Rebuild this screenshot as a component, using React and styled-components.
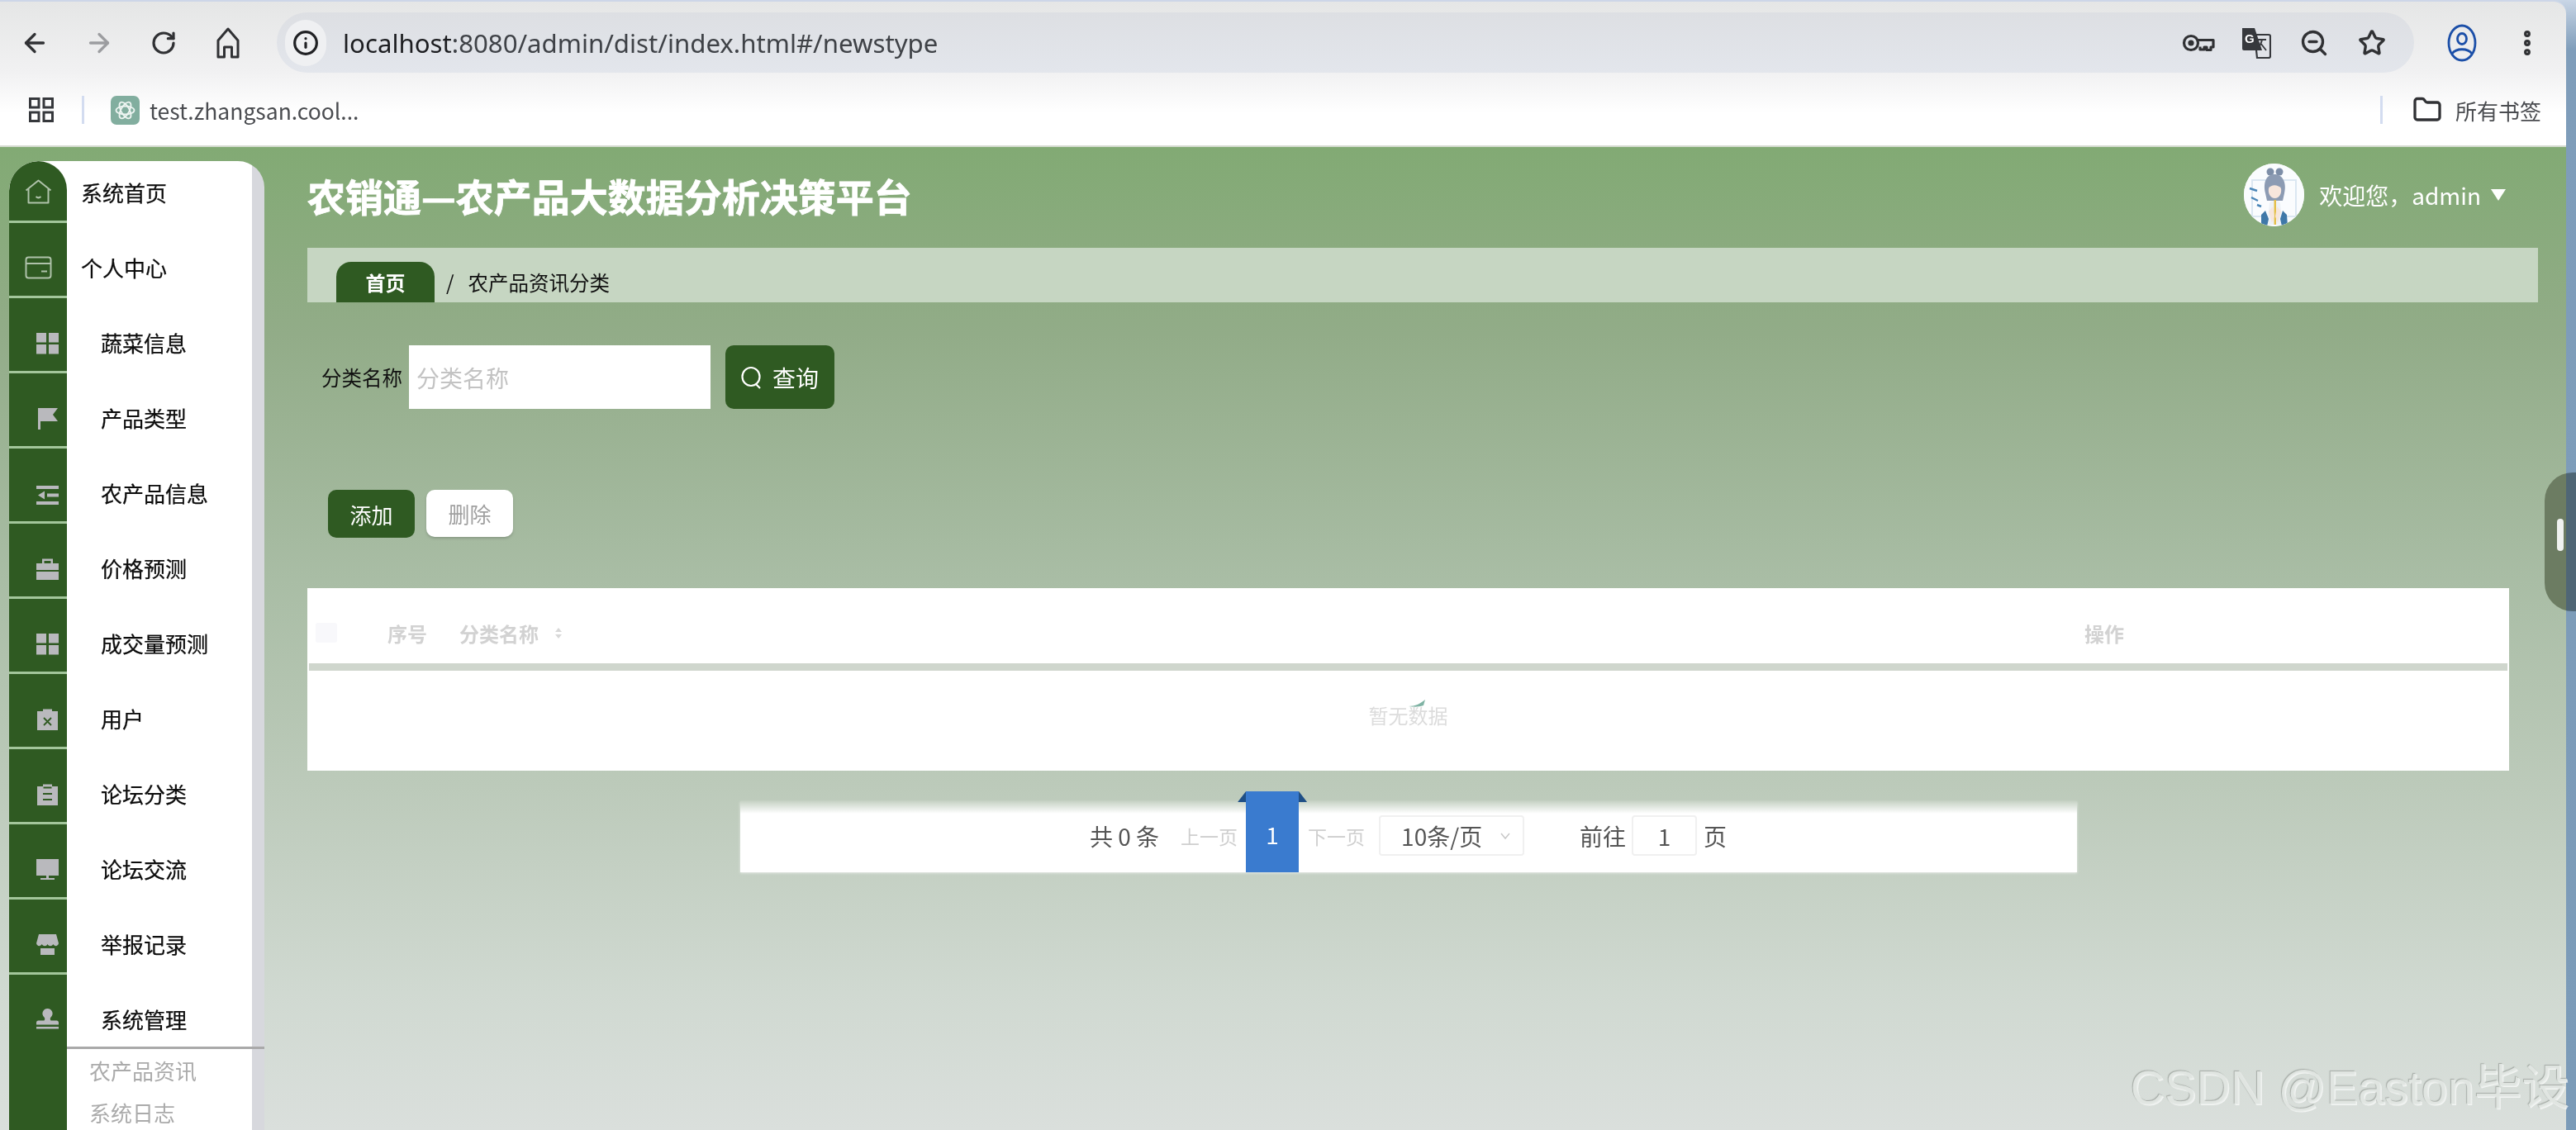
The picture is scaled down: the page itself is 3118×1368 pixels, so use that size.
import React from 'react';
import styled, { createGlobalStyle } from 'styled-components';
import { ArrowLeft, ArrowRight, RotateCw, ZoomOut, Star, EllipsisVertical, Info, Folder } from 'lucide-react';

const CJK = `"Noto Sans CJK SC", "Noto Sans", sans-serif`;
const GREEN = '#2f5a22';

const Global = createGlobalStyle`
  html, body { margin: 0; padding: 0; width: 3118px; height: 1368px; overflow: hidden; background: #7b9bb8; }
  * { box-sizing: border-box; }
  body { font-family: ${CJK}; }
`;

const Root = styled.div`
  position: relative;
  width: 3118px;
  height: 1368px;
  display: flex;
  overflow: hidden;
  background: linear-gradient(to bottom, #c9d6e6 0, #7f9dba 60px, #7b9bb8 100%);
  filter: blur(0.5px);
`;
const Main = styled.div`
  width: 3106px;
  height: 1368px;
  display: flex;
  flex-direction: column;
`;

/* browser chrome */
const Chrome = styled.header`
  height: 178px;
  flex: none;
  border-top: 2px solid #cdd6e8;
  border-top-right-radius: 16px;
  background: linear-gradient(to bottom, #e5e6e6 0, #f1f1f2 85px, #ffffff 135px);
  border-bottom: 2px solid #d5dbd0;
  display: flex;
  flex-direction: column;
`;
const NavBar = styled.div`
  display: flex;
  align-items: center;
  height: 73px;
  margin-top: 13px;
  padding-left: 3px;
`;
const NavCell = styled.div`
  flex: none;
  width: ${p => p.$w || 78}px;
  height: 73px;
  display: flex;
  align-items: center;
  justify-content: center;
  color: ${p => p.$color || '#303134'};
`;
const AddressBar = styled.div`
  flex: none;
  width: 2587px;
  height: 73px;
  margin: 0 18px 0 20px;
  padding: 0 16px 0 10px;
  border-radius: 37px;
  background: linear-gradient(to bottom, #dddfe3, #e3e6ec);
  display: flex;
  align-items: center;
`;
const InfoChip = styled.div`
  flex: none;
  width: 50px;
  height: 56px;
  border-radius: 28px;
  background: #eff0f2;
  display: flex;
  align-items: center;
  justify-content: center;
  color: #202124;
  margin-right: 20px;
`;
const Url = styled.div`
  flex: 1;
  font: 400 31.2px "Noto Sans", sans-serif;
  color: #3f4247;
  white-space: nowrap;
  & b { font-weight: 400; color: #1c1d20; }
`;
const BookmarkBar = styled.div`
  flex: 1;
  display: flex;
  align-items: center;
  padding: 2px 30px 0 35px;
`;
const Sep = styled.div`
  flex: none;
  width: 3px;
  height: 34px;
  background: #d3dcf0;
  margin: ${p => p.$m};
`;
const BookmarkText = styled.span`
  font: 400 ${p => p.$size || 26}px ${CJK};
  color: ${p => p.$color || '#4a4c50'};
  white-space: nowrap;
  margin-left: ${p => p.$ml || 0}px;
`;
const Spacer = styled.div`flex: 1;`;

/* page */
const Page = styled.div`
  flex: 1;
  min-height: 0;
  display: flex;
  padding: 17px 0 0 11px;
  background: linear-gradient(to bottom, #82aa74 0%, #92ac88 19%, #a9bda5 44%, #bccaba 65%, #d0d9d1 86%, #dadfdc 100%);
`;

const Sidebar = styled.nav`
  flex: none;
  width: 309px;
  display: flex;
  flex-direction: column;
  padding-right: 15px;
  overflow: hidden;
  border-radius: 36px 32px 0 0;
  background: linear-gradient(to right, #ffffff calc(100% - 15px), #d7d8dd calc(100% - 15px));
`;
const Row = styled.div`
  flex: none;
  height: ${p => p.$h || 91}px;
  display: flex;
`;
const IconCell = styled.div`
  flex: none;
  width: 70px;
  display: flex;
  align-items: flex-end;
  justify-content: ${p => (p.$sub ? 'flex-start' : 'center')};
  padding: 0 0 20px ${p => (p.$sub ? 33 : 0)}px;
  background: ${GREEN};
  color: ${p => (p.$sub ? '#b9b9bd' : '#afc2aa')};
  border-bottom: ${p => (p.$noLine ? 'none' : '3px solid #a3c69b')};
  border-radius: ${p => (p.$first ? '35px 35px 0 0' : '0')};
`;
const RowLabel = styled.div`
  flex: 1;
  display: flex;
  align-items: flex-end;
  padding: 0 0 ${p => (p.$noLine ? 15 : 19)}px ${p => (p.$sub ? 41 : 17)}px;
  font-size: 26px;
  line-height: 36px;
  color: #0c0c0c;
  -webkit-text-stroke: 0.25px #0c0c0c;
  white-space: nowrap;
`;
const SubRow = styled.div`
  flex: 1;
  display: flex;
`;
const SubIconFill = styled.div`
  flex: none;
  width: 70px;
  background: ${GREEN};
`;
const SubMenu = styled.div`
  flex: 1;
  margin-right: -15px;
  padding: 5px 0 0 27px;
  border-top: 3px solid #a9a9a9;
  display: flex;
  flex-direction: column;
  gap: 9px;
`;
const SubItem = styled.div`
  height: 42px;
  line-height: 42px;
  font-size: 26px;
  color: #ababab;
  white-space: nowrap;
`;

const Content = styled.main`
  flex: none;
  width: 2734px;
  margin-left: 52px;
  display: flex;
  flex-direction: column;
`;
const TopBar = styled.div`
  flex: none;
  height: 105px;
  display: flex;
  align-items: center;
  justify-content: space-between;
  padding: 0 73px 24px 0;
`;
const Title = styled.h1`
  margin: 0;
  font: 700 46px/1 ${CJK};
  -webkit-text-stroke: 0.8px #fff;
  color: #fff;
  white-space: nowrap;
`;
const User = styled.div`
  display: flex;
  align-items: center;
  color: #fff;
  font-size: 28px;
`;
const AvatarWrap = styled.div`
  width: 73px;
  height: 76px;
  border-radius: 50%;
  overflow: hidden;
  margin-right: 18px;
  background: #fff;
`;
const Caret = styled.span`
  width: 0;
  height: 0;
  margin-left: 12px;
  border-left: 9px solid transparent;
  border-right: 9px solid transparent;
  border-top: 14px solid #fff;
`;
const Breadcrumb = styled.div`
  flex: none;
  width: 2700px;
  height: 66px;
  background: #c6d6c2;
  display: flex;
  align-items: flex-end;
  padding-left: 35px;
  font-size: 24.5px;
  color: #111;
`;
const CrumbTab = styled.div`
  width: 119px;
  height: 49px;
  border-radius: 18px 18px 0 0;
  background: ${GREEN};
  color: #fff;
  font-weight: 700;
  font-size: 24px;
  display: flex;
  align-items: center;
  justify-content: center;
`;
const CrumbText = styled.span`
  height: 49px;
  line-height: 50px;
  margin-left: ${p => p.$ml}px;
`;
const SearchRow = styled.div`
  flex: none;
  margin-top: 52px;
  padding-left: 17px;
  display: flex;
  align-items: center;
`;
const SearchLabel = styled.label`
  font-size: 24.5px;
  color: #111;
  margin-right: 8px;
  white-space: nowrap;
`;
const SearchInput = styled.input`
  width: 365px;
  height: 77px;
  border: none;
  outline: none;
  background: #fff;
  padding: 0 9px;
  font: 400 28px ${CJK};
  &::placeholder { color: #c3c3c3; opacity: 1; }
`;
const Btn = styled.button`
  flex: none;
  width: ${p => p.$w}px;
  height: ${p => p.$h}px;
  border: none;
  border-radius: 10px;
  padding: 0;
  background: ${p => (p.$ghost ? '#fff' : GREEN)};
  color: ${p => (p.$ghost ? '#a0a0a0' : '#fff')};
  box-shadow: ${p => (p.$ghost ? '0 2px 3px rgba(90,100,90,.35)' : 'none')};
  font: 400 ${p => p.$fs}px ${CJK};
  display: flex;
  align-items: center;
  justify-content: center;
  gap: 12px;
`;
const SearchBtn = styled(Btn)`margin-left: 18px;`;
const ToolRow = styled.div`
  flex: none;
  margin-top: 98px;
  padding-left: 25px;
  display: flex;
  gap: 14px;
`;

const Table = styled.section`
  flex: none;
  width: 2665px;
  height: 221px;
  margin-top: 61px;
  background: #fff;
  display: flex;
  flex-direction: column;
`;
const HeadRow = styled.div`
  flex: none;
  height: 91px;
  display: grid;
  grid-template-columns: 97px 87px 1967px auto;
  align-items: center;
  padding-top: 17px;
  font-size: 24px;
  font-weight: 700;
  color: #d2d2d2;
`;
const CheckBox = styled.span`
  display: block;
  width: 26px;
  height: 24px;
  margin-left: 10px;
  background: #f8f8fb;
  border-radius: 3px;
`;
const HeadName = styled.span`
  display: flex;
  align-items: center;
  gap: 20px;
`;
const SortMark = styled.span`
  display: flex;
  flex-direction: column;
  gap: 3px;
  &::before, &::after {
    content: '';
    width: 0;
    height: 0;
    border-left: 4px solid transparent;
    border-right: 4px solid transparent;
  }
  &::before { border-bottom: 5px solid #d8d8d8; }
  &::after { border-top: 5px solid #d8d8d8; }
`;
const HeadRule = styled.div`
  flex: none;
  height: 9px;
  margin: 0 2px;
  background: #cfd6cd;
`;
const EmptyBody = styled.div`
  flex: 1;
  display: flex;
  flex-direction: column;
  align-items: center;
  justify-content: center;
  padding-bottom: 19px;
`;
const EmptyText = styled.span`
  font-size: 24px;
  line-height: 30px;
  color: #dcdcdc;
  margin-top: -5px;
`;
const TickWrap = styled.span`
  margin-left: 20px;
`;
const Pager = styled.div`
  flex: none;
  width: 1618px;
  height: 86px;
  margin: 37px 0 0 524px;
  padding-left: 423px;
  display: flex;
  align-items: center;
  background: linear-gradient(to bottom, rgba(255,255,255,.15) 0, #fff 15px);
  box-shadow: 0 1px 3px rgba(255,255,255,.6);
  font-size: 28px;
  color: #555;
  white-space: nowrap;
`;
const PagerMuted = styled.span`
  font-size: 23px;
  color: #cfcfcf;
  margin: ${p => p.$m};
`;
const PageBtn = styled.div`
  position: relative;
  flex: none;
  width: 64px;
  height: 98px;
  align-self: flex-end;
  margin-bottom: -3px;
  background: #3a7bcf;
  color: #fff;
  font-size: 28px;
  display: flex;
  align-items: center;
  justify-content: center;
  padding-top: 6px;
  &::before {
    content: '';
    position: absolute;
    top: 0;
    left: -10px;
    right: -10px;
    height: 13px;
    z-index: -1;
    background: #1f4f86;
    clip-path: polygon(10px 0, calc(100% - 10px) 0, 100% 100%, 0 100%);
  }
`;
const PagerInner = styled.div`
  position: relative;
  z-index: 0;
  display: flex;
  align-items: center;
  height: 100%;
  padding-bottom: 3px;
`;
const SizeSelect = styled.div`
  flex: none;
  width: 176px;
  height: 49px;
  margin-left: 17px;
  padding: 0 14px 0 25px;
  border: 2px solid #f0f0f0;
  border-radius: 4px;
  display: flex;
  align-items: center;
  justify-content: space-between;
`;
const Goto = styled.span`
  margin: ${p => p.$m};
`;
const GotoInput = styled.div`
  flex: none;
  width: 79px;
  height: 49px;
  border: 2px solid #f0f0f0;
  border-radius: 4px;
  display: flex;
  align-items: center;
  justify-content: center;
`;

/* things on top */
const Handle = styled.div`
  position: absolute;
  right: 0;
  top: 572px;
  width: 38px;
  height: 168px;
  border-radius: 34px 0 0 34px;
  background: linear-gradient(to right, #6c7c62 26px, #4f6675 26px);
  display: flex;
  align-items: center;
  justify-content: flex-end;
  padding: 0 15px 18px 0;
  &::after {
    content: '';
    width: 8px;
    height: 39px;
    border-radius: 4px;
    background: #f0f2f0;
  }
`;
const Watermark = styled.div`
  position: absolute;
  right: 8px;
  top: 1277px;
  font: 400 57.5px/80px "Liberation Sans", ${CJK};
  color: rgba(232, 236, 233, .85);
  text-shadow: -1px -1px 1px rgba(120,125,120,.5), 1px 1px 0 rgba(255,255,255,.7);
  white-space: nowrap;
`;

const S = ({ children, vb = '0 0 27 27', size = 27, h }) => (
  <svg width={size} height={h || size} viewBox={vb} fill="currentColor" style={{ display: 'block' }}>{children}</svg>
);

const HomeLine = () => (
  <svg width="33" height="30" viewBox="0 0 33 30" fill="none" stroke="currentColor" strokeWidth="2" style={{ display: 'block' }}>
    <path d="M1.5 13.5 16.5 1.5l15 12M4.5 11.5V28.5h24V11.5" strokeLinejoin="round" />
    <path d="M13.5 21c2 1.8 4 1.8 6 0" />
  </svg>
);
const CardLine = () => (
  <svg width="33" height="28" viewBox="0 0 33 28" fill="none" stroke="currentColor" strokeWidth="2" style={{ display: 'block' }}>
    <rect x="1.5" y="1.5" width="30" height="25" rx="3" />
    <path d="M1.5 9h30M20 18.5h7" />
  </svg>
);
const Grid = () => (
  <S><rect x="0" y="1" width="12" height="11.5" /><rect x="15" y="1" width="12" height="11.5" /><rect x="0" y="15" width="12" height="11.5" /><rect x="15" y="15" width="12" height="11.5" /></S>
);
const Flag = () => (
  <S><path d="M2 1h3v26H2zM5 1h21l-6 8 6 8H5z" /></S>
);
const Indent = () => (
  <S h={23} vb="0 0 27 23"><path d="M0 0h27v4H0zM13 9.5h14v4H13zM0 19h27v4H0zM10 6.5v10L2 11.5z" /></S>
);
const Case = () => (
  <S><path d="M7 7V1.5h13V7h-2.500V4H9.500v3zM0 7h27v8H0zM0 17h27v10H0z" /></S>
);
const ClipX = () => (
  <S>
    <path d="M1 4h7V1.500h11V4h7v23H1z" />
    <path d="M9 12l9 9M18 12l-9 9" stroke={GREEN} strokeWidth="1.800" />
  </S>
);
const ClipLines = () => (
  <S>
    <path d="M1 4h7V1.500h11V4h7v23H1z" />
    <path d="M8 13h11M8 20h11M8.500 5.500h10" stroke={GREEN} strokeWidth="2.200" />
  </S>
);
const Monitor = () => (
  <S><path d="M0 1h27v20H0zM12 21h3v3h7v2H5v-2h7z" /></S>
);
const Store = () => (
  <S><path d="M3 1h21l3 11c-1 4-5 4-6.700 1-1.500 3-5 3-6.800 0-1.500 3-5 3-6.800 0C5 16 1 16 0 12zM5 18h17v8H5z" /></S>
);
const Stamp = () => (
  <S><path d="M13.500 1a6 6 0 0 1 4 10.500c-1 1-1 3 0 4h7c1.500 0 2.500 1 2.500 2.500v2.500H0V18c0-1.500 1-2.500 2.500-2.500h7c1-1 1-3 0-4a6 6 0 0 1 4-10.500zM0 23h27v2.500H0z" /></S>
);

const KeyIcon = () => (
  <svg width="40" height="30" viewBox="0 0 40 30" fill="none" stroke="#303134" strokeWidth="3.200" style={{ display: 'block' }}>
    <circle cx="11" cy="15" r="8.500" />
    <circle cx="11" cy="15" r="2" fill="#303134" />
    <path d="M19.500 11.500H38v8.500h-3v3.500h-5V20h-3v3h-5v-3.500" strokeLinejoin="round" />
  </svg>
);
const TranslateIcon = () => (
  <svg width="36" height="38" viewBox="0 0 36 38" style={{ display: 'block' }}>
    <path d="M1 1h15l9 27H3a2 2 0 0 1-2-2z" fill="#36383c" />
    <path d="M16 9h17a2 2 0 0 1 2 2v24a2 2 0 0 1-2 2H19z" fill="none" stroke="#36383c" strokeWidth="2.200" />
    <text x="4" y="19" fontSize="15" fontWeight="700" fill="#fff" fontFamily="Liberation Sans">G</text>
    <path d="M20 15h10M25 15c-1 5-3 8-5 10M23 19l7 9" stroke="#36383c" strokeWidth="1.800" fill="none" />
  </svg>
);
const ProfileIcon = () => (
  <svg width="36" height="46" viewBox="0 0 36 46" fill="none" stroke="#1b4fa8" strokeWidth="2.800" style={{ display: 'block' }}>
    <ellipse cx="18" cy="23" rx="16" ry="21" />
    <ellipse cx="18" cy="18" rx="5.500" ry="6.500" />
    <path d="M6 36c5-7 19-7 24 0" />
  </svg>
);
const AppsIcon = () => (
  <svg width="30" height="30" viewBox="0 0 30 30" fill="none" stroke="#36383c" strokeWidth="3" style={{ display: 'block', flex: 'none' }}>
    <rect x="1.500" y="1.500" width="10.500" height="10.500" />
    <rect x="18" y="1.500" width="10.500" height="10.500" />
    <rect x="1.500" y="18" width="10.500" height="10.500" />
    <rect x="18" y="18" width="10.500" height="10.500" />
  </svg>
);
const HouseChrome = () => (
  <svg width="28" height="38" viewBox="0 0 28 38" fill="none" stroke="#303134" strokeWidth="3" style={{ display: 'block' }}>
    <path d="M2 16 14 2l12 14v20h-7.500V24h-9v12H2z" strokeLinejoin="round" />
  </svg>
);
const Favicon = () => (
  <svg width="35" height="35" viewBox="0 0 35 35" style={{ display: 'block', flex: 'none' }}>
    <rect width="35" height="35" rx="7" fill="#82ae9f" />
    <g fill="none" stroke="#eef5f2" strokeWidth="1.800">
      <ellipse cx="17.500" cy="17.500" rx="11" ry="5" />
      <ellipse cx="17.500" cy="17.500" rx="11" ry="5" transform="rotate(60 17.500 17.500)" />
      <ellipse cx="17.500" cy="17.500" rx="11" ry="5" transform="rotate(120 17.500 17.500)" />
    </g>
  </svg>
);
const Avatar = () => (
  <svg width="73" height="76" viewBox="0 0 73 76" style={{ display: 'block' }}>
    <rect width="73" height="76" fill="#fafcfe" />
    <path d="M10 20h53v44H10z" fill="none" stroke="#dbe7f2" strokeWidth="2" />
    <path d="M7 30l9 3M9 41l8 4M16 50l5 2" stroke="#4b86b8" strokeWidth="2.500" />
    <circle cx="32" cy="10" r="4.500" fill="#7d8ea8" />
    <circle cx="43" cy="10" r="4.500" fill="#7d8ea8" />
    <path d="M26 36c-3-13 1-23 11-23s15 10 12 23l-2 9H28z" fill="#8c9bb3" />
    <path d="M30 30c3-5 11-5 15 0 1 6-2 12-7.500 12S29 36 30 30z" fill="#f7e6dc" />
    <path d="M31 48c2-4 11-4 13 0l3 26H28z" fill="#eef2f7" />
    <path d="M36.500 44h2.500v30h-2.500z" fill="#e5c04a" />
    <path d="M21 62l5-5 4 10-2 9h-7zM52 62l-5-5-3 10 2 9h7z" fill="#3f78a8" />
    <path d="M30 58l5-6 2 12-3 8zM45 58l-5-6-2 12 3 8z" fill="#f7e6dc" />
  </svg>
);
const SearchGlyph = () => (
  <svg width="26" height="28" viewBox="0 0 26 28" fill="none" stroke="#fff" strokeWidth="2.200" style={{ display: 'block' }}>
    <ellipse cx="12" cy="13" rx="10.500" ry="11" />
    <path d="M18 22l5 5" />
  </svg>
);
const Tick = () => (
  <svg width="24" height="10" viewBox="0 0 24 10" style={{ display: 'block' }}>
    <path d="M2 9c8 0 14-3 20-8l-2 7c-6 2-12 2-18 1z" fill="#7fb3a4" />
  </svg>
);
const Chevron = () => (
  <svg width="14" height="10" viewBox="0 0 14 10" fill="none" stroke="#c8c8c8" strokeWidth="1.500" style={{ display: 'block' }}>
    <path d="M2 2l5 6 5-6" />
  </svg>
);

const MENU = [
  { label: '系统首页', Icon: HomeLine, h: 75, first: true },
  { label: '个人中心', Icon: CardLine },
  { label: '蔬菜信息', Icon: Grid, sub: true },
  { label: '产品类型', Icon: Flag, sub: true },
  { label: '农产品信息', Icon: Indent, sub: true },
  { label: '价格预测', Icon: Case, sub: true },
  { label: '成交量预测', Icon: Grid, sub: true },
  { label: '用户', Icon: ClipX, sub: true },
  { label: '论坛分类', Icon: ClipLines, sub: true },
  { label: '论坛交流', Icon: Monitor, sub: true },
  { label: '举报记录', Icon: Store, sub: true },
  { label: '系统管理', Icon: Stamp, sub: true, noLine: true, h: 87 },
];

export default function App() {
  return (
    <Root>
      <Global />
      <Main>
        <Chrome>
          <NavBar>
            <NavCell><ArrowLeft size={36} strokeWidth={2.2} /></NavCell>
            <NavCell $color="#9c9da0"><ArrowRight size={36} strokeWidth={2.2} /></NavCell>
            <NavCell><RotateCw size={32} strokeWidth={2.4} /></NavCell>
            <NavCell><HouseChrome /></NavCell>
            <AddressBar>
              <InfoChip><Info size={32} strokeWidth={2.4} /></InfoChip>
              <Url><b>localhost</b>:8080/admin/dist/index.html#/newstype</Url>
              <NavCell $w={70}><KeyIcon /></NavCell>
              <NavCell $w={70}><TranslateIcon /></NavCell>
              <NavCell $w={70}><ZoomOut size={36} strokeWidth={2.2} /></NavCell>
              <NavCell $w={70}><Star size={34} strokeWidth={2.4} /></NavCell>
            </AddressBar>
            <NavCell $w={79}><ProfileIcon /></NavCell>
            <NavCell $w={79}><EllipsisVertical size={38} strokeWidth={3} /></NavCell>
          </NavBar>
          <BookmarkBar>
            <AppsIcon />
            <Sep $m="0 32px 0 34px" />
            <Favicon />
            <BookmarkText $ml={12} $size={26.5}>test.zhangsan.cool...</BookmarkText>
            <Spacer />
            <Sep $m="0 36px 0 0" />
            <Folder size={36} strokeWidth={2.2} color="#303134" />
            <BookmarkText $ml={16}>所有书签</BookmarkText>
          </BookmarkBar>
        </Chrome>
        <Page>
          <Sidebar>
            {MENU.map(m => (
              <Row key={m.label} $h={m.h}>
                <IconCell $sub={m.sub} $first={m.first} $noLine={m.noLine}><m.Icon /></IconCell>
                <RowLabel $sub={m.sub} $noLine={m.noLine}>{m.label}</RowLabel>
              </Row>
            ))}
            <SubRow>
              <SubIconFill />
              <SubMenu>
                <SubItem>农产品资讯</SubItem>
                <SubItem>系统日志</SubItem>
              </SubMenu>
            </SubRow>
          </Sidebar>
          <Content>
            <TopBar>
              <Title>农销通—农产品大数据分析决策平台</Title>
              <User>
                <AvatarWrap><Avatar /></AvatarWrap>
                欢迎您，admin
                <Caret />
              </User>
            </TopBar>
            <Breadcrumb>
              <CrumbTab>首页</CrumbTab>
              <CrumbText $ml={14}>/</CrumbText>
              <CrumbText $ml={17}>农产品资讯分类</CrumbText>
            </Breadcrumb>
            <SearchRow>
              <SearchLabel>分类名称</SearchLabel>
              <SearchInput placeholder="分类名称" />
              <SearchBtn $w={132} $h={77} $fs={28}><SearchGlyph />查询</SearchBtn>
            </SearchRow>
            <ToolRow>
              <Btn $w={105} $h={58} $fs={26}>添加</Btn>
              <Btn $w={105} $h={57} $fs={26} $ghost>删除</Btn>
            </ToolRow>
            <Table>
              <HeadRow>
                <CheckBox />
                <span>序号</span>
                <HeadName>分类名称<SortMark /></HeadName>
                <span>操作</span>
              </HeadRow>
              <HeadRule />
              <EmptyBody>
                <TickWrap><Tick /></TickWrap>
                <EmptyText>暂无数据</EmptyText>
              </EmptyBody>
            </Table>
            <Pager>
              <PagerInner>
                <span>共 0 条</span>
                <PagerMuted $m="0 10px 0 26px">上一页</PagerMuted>
                <PageBtn>1</PageBtn>
                <PagerMuted $m="0 0 0 11px">下一页</PagerMuted>
                <SizeSelect>10条/页<Chevron /></SizeSelect>
                <Goto $m="0 7px 0 67px">前往</Goto>
                <GotoInput>1</GotoInput>
                <Goto $m="0 0 0 8px">页</Goto>
              </PagerInner>
            </Pager>
          </Content>
        </Page>
      </Main>
      <Handle />
      <Watermark>CSDN @Easton毕设</Watermark>
    </Root>
  );
}
